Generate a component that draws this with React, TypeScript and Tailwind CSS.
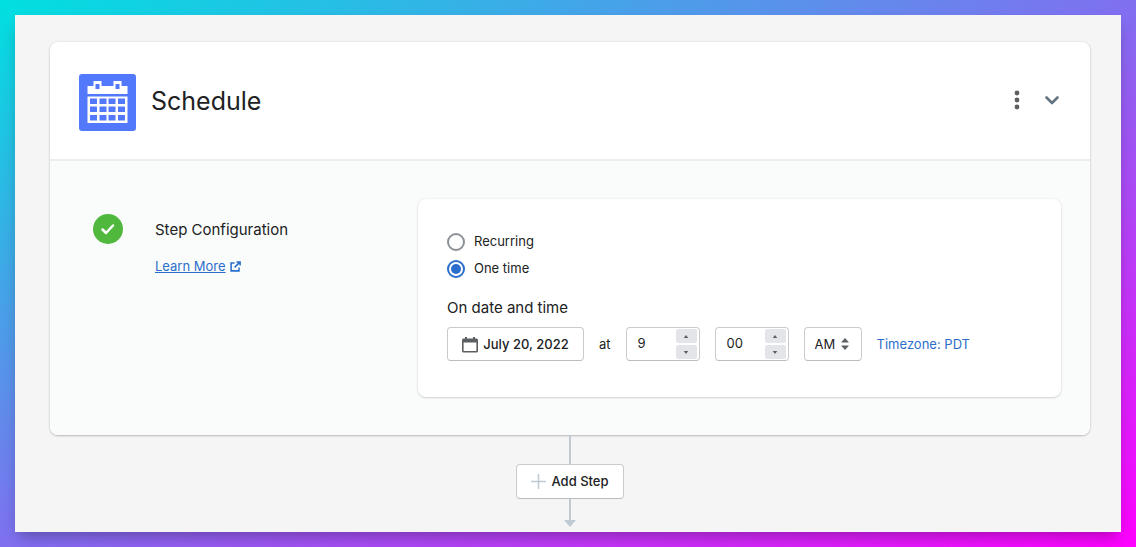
import React, { useState } from 'react';

interface NumberFieldProps {
  label: string;
  value: number;
  max: number;
  min?: number;
  pad?: boolean;
  onChange: (value: number) => void;
}

const CalendarBadge: React.FC = () => (
  <svg viewBox="0 0 57 57" className="h-[57px] w-[57px] shrink-0" aria-hidden="true">
    <rect width="57" height="57" rx="3" fill="#5279fb" />
    <path d="M8.500 12h6V7h8v5h12V7h8v5h6v8h-40z" fill="#fff" />
    <path d="M16.500 10h4v5h-4zM36.500 10h4v5h-4z" fill="#5279fb" />
    <path d="M8.500 22.500h40V49h-40z" fill="#fff" />
    {[24.5, 32.5, 41].map(y =>
      [11, 20.5, 29.5, 39].map(x => (
        <rect key={`${x}-${y}`} x={x} y={y} width="7" height="5.500" fill="#5279fb" />
      ))
    )}
  </svg>
);

const NumberField: React.FC<NumberFieldProps> = ({ label, value, max, min = 0, pad, onChange }) => {
  const text = pad ? String(value).padStart(2, '0') : String(value);
  const update = (next: number) => {
    if (next >= min && next <= max) onChange(next);
  };

  return (
    <div className="flex h-[34px] w-[74px] items-center rounded-[4px] border border-[#c9cccf] border-b-[#b9bdc0] bg-white pr-[2px]">
      <input
        type="text"
        inputMode="numeric"
        aria-label={label}
        value={text}
        onChange={e => update(Number(e.target.value))}
        className="w-0 min-w-0 flex-1 bg-transparent pl-[11px] text-[13px] outline-none"
      />
      <div className="flex flex-col gap-[2px]">
        <button
          type="button"
          aria-label={`Increase ${label}`}
          onClick={() => update(value + 1)}
          className="flex h-[14px] w-[21px] items-center justify-center rounded-[2px] bg-[#e3e5e8]"
        >
          <svg viewBox="0 0 6 4" className="h-[3px] w-[6px]"><path d="M3 0l3 4H0z" fill="#5c5f62" /></svg>
        </button>
        <button
          type="button"
          aria-label={`Decrease ${label}`}
          onClick={() => update(value - 1)}
          className="flex h-[14px] w-[21px] items-center justify-center rounded-[2px] bg-[#e3e5e8]"
        >
          <svg viewBox="0 0 6 4" className="h-[3px] w-[6px]"><path d="M0 0h6L3 4z" fill="#5c5f62" /></svg>
        </button>
      </div>
    </div>
  );
};

export default function App() {
  const [mode, setMode] = useState('once');
  const [hour, setHour] = useState(9);
  const [minute, setMinute] = useState(0);

  const radioClass =
    "h-[18px] w-[18px] appearance-none rounded-full border-2 border-[#8c9196] bg-white checked:border-[#2c6ecb] checked:bg-[#2c6ecb] checked:bg-clip-content checked:p-[2px]";

  return (
    <div className="flex min-h-screen flex-col bg-[linear-gradient(to_bottom_right,#00e0e0,#ff00ff)] p-[15px] font-['Inter','Liberation_Sans',sans-serif] text-[13px] text-[#202223]">
      <main className="flex flex-1 flex-col bg-[#f5f5f5] pt-[27px] pr-[31px] pl-[35px] shadow-[0_8px_14px_-4px_rgba(0,0,0,0.3)]">
        <section className="rounded-lg bg-white shadow-[0_0_3px_rgba(23,24,24,0.08),0_1px_2px_rgba(0,0,0,0.22)]">
          <header className="flex items-center border-b-2 border-[#ebeeee] px-[29px] pt-8 pb-7">
            <CalendarBadge />
            <h1 className="ml-[15px] flex-1 pb-1 text-[25px] leading-8">Schedule</h1>
            <button type="button" aria-label="More actions" className="mb-[5px] flex h-6 w-6 items-center justify-center">
              <svg viewBox="0 0 6 20" className="h-[20px] w-[6px]" fill="#5c5f62">
                <circle cx="3" cy="3" r="2.400" />
                <circle cx="3" cy="10" r="2.400" />
                <circle cx="3" cy="17" r="2.400" />
              </svg>
            </button>
            <button type="button" aria-label="Collapse step" className="mb-[5px] ml-[11px] -mr-[3px] flex h-6 w-6 items-center justify-center">
              <svg viewBox="0 0 16 10" className="h-[10px] w-[16px]" fill="none" stroke="#637381" strokeWidth="2.600" strokeLinecap="round" strokeLinejoin="round">
                <path d="M2.500 2.500L8 8l5.500-5.500" />
              </svg>
            </button>
          </header>

          <div className="flex rounded-b-lg bg-[#fafcfb] py-[38px] pr-[29px]">
            <div className="flex w-[368px] items-start pt-[15px] pl-[43px]">
              <svg viewBox="0 0 30 30" className="h-[30px] w-[30px] shrink-0" role="img" aria-label="Complete">
                <circle cx="15" cy="15" r="15" fill="#50b83c" />
                <path d="M9.500 15.500l3.500 3.500 7-7.500" fill="none" stroke="#fff" strokeWidth="2.500" strokeLinecap="round" strokeLinejoin="round" />
              </svg>
              <div className="ml-8 pt-1">
                <h2 className="text-[15px] leading-6">Step Configuration</h2>
                <a href="#learn-more" className="mt-[14px] flex items-center gap-1 leading-5 text-[#2c6ecb]">
                  <span className="underline">Learn More</span>
                  <svg viewBox="0 0 12 12" className="h-[11px] w-[11px]" fill="none" stroke="#2c6ecb" strokeWidth="1.700">
                    <path d="M5 2.200H1.200v8.600h8.600V7M7 1h4v4M11 1L5 7" />
                  </svg>
                </a>
              </div>
            </div>

            <div className="flex-1 rounded-lg bg-white px-[29px] pt-[29px] pb-[36px] shadow-[0_0_3px_rgba(23,24,24,0.08),0_1px_2px_rgba(0,0,0,0.14)]">
              <fieldset>
                <label className="flex h-[27px] items-center gap-[9px]">
                  <input type="radio" name="mode" checked={mode === 'recurring'} onChange={() => setMode('recurring')} className={radioClass} />
                  Recurring
                </label>
                <label className="flex h-[27px] items-center gap-[9px]">
                  <input type="radio" name="mode" checked={mode === 'once'} onChange={() => setMode('once')} className={radioClass} />
                  One time
                </label>
              </fieldset>

              <h3 className="mt-[14px] text-[15px] leading-6">On date and time</h3>
              <div className="mt-[7px] flex items-center gap-[15px]">
                <button type="button" className="flex h-[34px] w-[137px] items-center justify-center gap-[5px] rounded-[4px] border border-[#c9cccf] border-b-[#b9bdc0] bg-white pt-px font-medium whitespace-nowrap">
                  <svg viewBox="0 0 16 16" className="h-[16px] w-[16px]" aria-hidden="true">
                    <path d="M1.500 1.500H3V0h2v1.500h6V0h2v1.500h1.500Q16 1.500 16 3v11q0 1.500-1.500 1.500h-13Q0 15.500 0 14V3q0-1.500 1.500-1.500zM1.600 5.500v8.400h12.800V5.500z" fill="#5c5f62" fillRule="evenodd" />
                  </svg>
                  July 20, 2022
                </button>
                <span className="pt-px">at</span>
                <NumberField label="hour" value={hour} min={1} max={12} onChange={setHour} />
                <NumberField label="minute" value={minute} max={59} pad onChange={setMinute} />
                <div className="relative">
                  <select aria-label="AM or PM" className="h-[34px] w-[58px] appearance-none rounded-[4px] border border-[#c9cccf] border-b-[#b9bdc0] bg-white pt-px pl-[10px] text-[13px]">
                    <option>AM</option>
                    <option>PM</option>
                  </select>
                  <svg viewBox="0 0 8 12" className="pointer-events-none absolute top-[11px] right-[13px] h-[12px] w-[8px]" fill="#5c5f62">
                    <path d="M4 0l4 4.500H0zM0 7.500h8L4 12z" />
                  </svg>
                </div>
                <a href="#timezone" className="pt-px whitespace-nowrap text-[#2c6ecb]">Timezone: PDT</a>
              </div>
            </div>
          </div>
        </section>

        <div className="flex flex-col items-center">
          <div className="h-[29px] w-[2px] bg-[#c0cad3]" />
          <button type="button" className="flex h-[35px] w-[108px] items-center justify-center gap-[5px] rounded-[4px] border border-[#c9cccf] border-b-[#b9bdc0] bg-white font-medium whitespace-nowrap">
            <svg viewBox="0 0 15 15" className="h-[15px] w-[15px]" stroke="#c0cad3" strokeWidth="1.500">
              <path d="M7.500 0v15M0 7.500h15" />
            </svg>
            Add Step
          </button>
          <div className="h-[21px] w-[2px] bg-[#c0cad3]" />
          <svg viewBox="0 0 12 7" className="h-[7px] w-[12px]"><path d="M0 0h12L6 7z" fill="#c0cad3" /></svg>
        </div>
      </main>
    </div>
  );
}
